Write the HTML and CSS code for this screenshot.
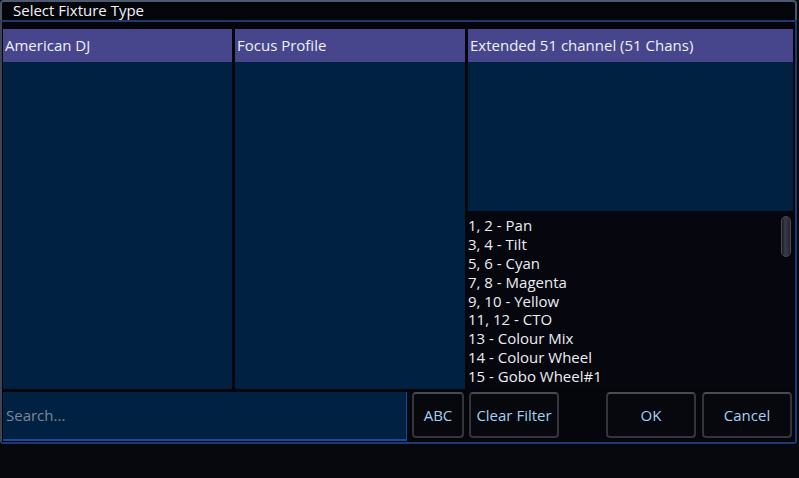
FILE: index.html
```html
<!DOCTYPE html>
<html>
<head>
<meta charset="utf-8">
<link rel="stylesheet" href="styles.css">
</head>
<body>
<div class="window">
  <div class="titlebar">Select Fixture Type</div>
  <div class="body">
    <div class="columns">
      <div class="col col-first">
        <div class="col-head">American DJ</div>
        <div class="col-fill"></div>
      </div>
      <div class="col col-second">
        <div class="col-head">Focus Profile</div>
        <div class="col-fill"></div>
      </div>
      <div class="col col-wide">
        <div class="col-head">Extended 51 channel (51 Chans)</div>
        <div class="col-fill col-fill-short"></div>
        <div class="chan-list">
          <ul class="chans">
            <li>1, 2 - Pan</li>
            <li>3, 4 - Tilt</li>
            <li>5, 6 - Cyan</li>
            <li>7, 8 - Magenta</li>
            <li>9, 10 - Yellow</li>
            <li>11, 12 - CTO</li>
            <li>13 - Colour Mix</li>
            <li>14 - Colour Wheel</li>
            <li>15 - Gobo Wheel#1</li>
          </ul>
          <div class="scroll-track"><div class="scroll-thumb"></div></div>
        </div>
      </div>
    </div>
    <div class="bottom-row">
      <div class="search">Search...</div>
      <button class="btn btn-abc">ABC</button>
      <button class="btn btn-clear">Clear Filter</button>
      <div class="spacer"></div>
      <button class="btn btn-ok">OK</button>
      <button class="btn btn-cancel">Cancel</button>
    </div>
  </div>
</div>
</body>
</html>
```
FILE: styles.css
```css
html, body {
  margin: 0;
  padding: 0;
  background: #07070e;
}
body {
  width: 799px;
  height: 478px;
  overflow: hidden;
  font-family: "Open Sans", "Noto Sans", sans-serif;
  font-size: 15px;
}
.window {
  width: 797px;
  display: flex;
  flex-direction: column;
}
.titlebar {
  box-sizing: border-box;
  height: 20px;
  background: #05060c;
  border-top: 2px solid #4c5a70;
  border-left: 2px solid #4a5264;
  border-right: 2px solid #46546c;
  border-radius: 4px 4px 0 0;
  color: #f2f4f8;
  padding-left: 11px;
  line-height: 17px;
}
.body {
  box-sizing: border-box;
  height: 424px;
  border-top: 2px solid #1c3a6c;
  border-left: 2px solid #3c4456;
  border-right: 2px solid #1c3a70;
  border-bottom: 2px solid #1c3a70;
  border-radius: 0 0 3px 3px;
  background: #05060c;
  padding: 7px 2px 0 1px;
  display: flex;
  flex-direction: column;
}
.columns {
  display: flex;
  gap: 3px;
  height: 360px;
}
.col {
  display: flex;
  flex-direction: column;
}
.col-first { width: 229px; }
.col-second { width: 230px; }
.col-wide { flex: 1; }
.col-head {
  height: 33px;
  flex: none;
  background: #47468c;
  color: #eef0f8;
  line-height: 33px;
  padding-left: 2px;
  white-space: nowrap;
}
.col-fill {
  flex: 1;
  background: #002141;
}
.col-fill-short {
  flex: none;
  height: 149px;
}
.chan-list {
  flex: 1;
  background: #06060e;
  display: flex;
}
.chans {
  list-style: none;
  margin: 0;
  padding: 5px 0 0 0;
  flex: 1;
}
.chans li {
  color: #eceef2;
  height: 18.9px;
  line-height: 18.9px;
  white-space: nowrap;
}
.scroll-track {
  box-sizing: border-box;
  width: 12px;
  padding: 5px 2px 0 0;
}
.scroll-thumb {
  box-sizing: border-box;
  width: 10px;
  height: 41px;
  border-radius: 5px;
  background: linear-gradient(to right, #1a1c24, #3a3c46 40%, #24262e);
  border: 1px solid #4a4c56;
}
.bottom-row {
  display: flex;
  align-items: center;
  margin-top: 3px;
  height: 49px;
}
.search {
  box-sizing: border-box;
  width: 404px;
  height: 49px;
  background: #002141;
  border-right: 1px solid #1a48a0;
  border-bottom: 2px solid #1a48a0;
  color: #7c8896;
  line-height: 47px;
  padding-left: 3px;
  align-self: flex-start;
}
.btn {
  box-sizing: border-box;
  height: 46px;
  background: #07070e;
  border: 2px solid #34353c;
  border-top-color: #4a4b52;
  border-radius: 4px;
  color: #a2d2f2;
  font-family: "Open Sans", "Noto Sans", sans-serif;
  font-size: 15px;
  padding: 0;
  margin-top: -3px;
}
.btn-abc { width: 52px; margin-left: 5px; }
.btn-clear { width: 90px; margin-left: 5px; }
.spacer { width: 47px; }
.btn-ok { width: 90px; }
.btn-cancel { width: 90px; margin-left: 6px; }
```
